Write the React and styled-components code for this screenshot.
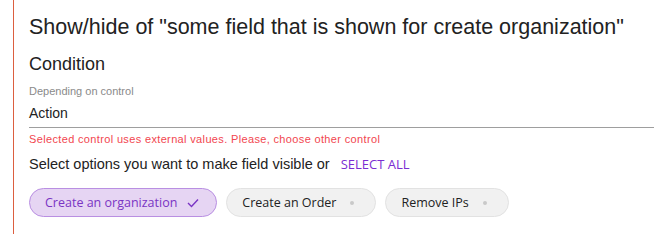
import React from 'react';
import styled, { createGlobalStyle } from 'styled-components';

const GlobalStyle = createGlobalStyle`
  html, body {
    margin: 0;
    padding: 0;
    background: #ffffff;
  }
  body {
    font-family: "Liberation Sans", Arial, sans-serif;
    color: #222222;
  }
`;

const Panel = styled.div`
  margin-left: 13px;
  border-left: 1px solid #dc5f40;
  padding: 14px 0 0 15px;
  height: 220px;
`;

const Title = styled.h1`
  margin: 0;
  font-size: 21.5px;
  line-height: 26px;
  font-weight: 400;
  white-space: nowrap;
`;

const SectionTitle = styled.h2`
  margin: 13px 0 0;
  font-size: 18px;
  line-height: 22px;
  font-weight: 400;
`;

const Field = styled.div`
  margin-top: 9px;
  border-bottom: 1px solid #9e9e9e;
  padding-bottom: 5px;
`;

const FieldLabel = styled.div`
  font-size: 11px;
  line-height: 14px;
  color: #8a8a8a;
`;

const FieldValue = styled.div`
  margin-top: 6px;
  font-size: 14px;
  line-height: 18px;
`;

const ErrorText = styled.div`
  margin-top: 4px;
  font-size: 11px;
  line-height: 14px;
  color: #f2464f;
  letter-spacing: 0.35px;
`;

const Hint = styled.div`
  margin-top: 9px;
  font-size: 14.5px;
  line-height: 18px;
  display: flex;
  align-items: baseline;
  gap: 11px;
`;

const LinkButton = styled.button`
  border: none;
  background: none;
  padding: 0;
  font-family: "Open Sans", sans-serif;
  font-size: 13px;
  color: #7b2ed2;
  cursor: pointer;
`;

const ChipRow = styled.div`
  margin-top: 15px;
  display: flex;
  gap: 9px;
`;

const Chip = styled.button`
  display: flex;
  align-items: center;
  gap: 10px;
  height: 29px;
  padding: 0 17px 0 15px;
  border-radius: 15px;
  border: 1px solid ${(p) => (p.$selected ? '#b98fe2' : '#e2e2e2')};
  background: ${(p) => (p.$selected ? '#e6d5f3' : '#f1f1f1')};
  color: ${(p) => (p.$selected ? '#7a34c4' : '#222222')};
  font-family: "Open Sans", sans-serif;
  font-size: 12.5px;
  cursor: pointer;
`;

const Indicator = styled.span`
  width: 12px;
  height: 12px;
  display: flex;
  align-items: center;
  justify-content: center;
`;

const Dot = styled.span`
  width: 4px;
  height: 4px;
  border-radius: 50%;
  background: #c9c9c9;
`;

const options = [
  { label: 'Create an organization', selected: true },
  { label: 'Create an Order', selected: false },
  { label: 'Remove IPs', selected: false },
];

const App = () => (
  <>
    <GlobalStyle />
    <Panel>
      <Title>Show/hide of "some field that is shown for create organization"</Title>
      <SectionTitle>Condition</SectionTitle>
      <Field>
        <FieldLabel>Depending on control</FieldLabel>
        <FieldValue>Action</FieldValue>
      </Field>
      <ErrorText>Selected control uses external values. Please, choose other control</ErrorText>
      <Hint>
        Select options you want to make field visible or
        <LinkButton>SELECT ALL</LinkButton>
      </Hint>
      <ChipRow>
        {options.map((o) => (
          <Chip key={o.label} $selected={o.selected}>
            {o.label}
            <Indicator>
              {o.selected ? (
                <svg width="12" height="10" viewBox="0 0 12 10">
                  <polyline
                    points="1,5 4.5,8.5 11,1.5"
                    fill="none"
                    stroke="#7a34c4"
                    strokeWidth="1.4"
                  />
                </svg>
              ) : (
                <Dot />
              )}
            </Indicator>
          </Chip>
        ))}
      </ChipRow>
    </Panel>
  </>
);

export default App;
